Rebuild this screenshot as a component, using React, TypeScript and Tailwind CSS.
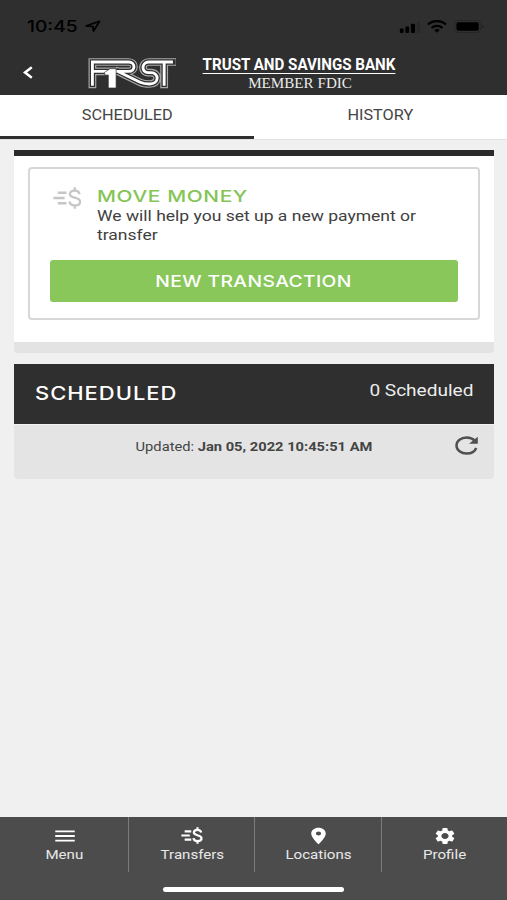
import type { ReactNode } from 'react'
import { MdLocationOn, MdMenu, MdSettings } from 'react-icons/md'

function BankLogo() {
  const letters =
    'M39 108V37H146C167 37 167 65 146 65H39M116 66L180 98C190 103 196 103 208 103C237 103 237 69 212 69H204C183 69 183 37 206 37H277M251 37V108'
  return (
    <svg className="h-[33px] w-[89px]" viewBox="23 19 263 99" fill="none" preserveAspectRatio="none">
      <path d={letters} stroke="#a8a8a8" strokeWidth="23" strokeLinecap="square" clipPath="url(#logo-base)" />
      <path d={letters} stroke="#2f2f2f" strokeWidth="16" strokeLinecap="square" clipPath="url(#logo-inner)" />
      <path d={letters} stroke="#ffffff" strokeWidth="8.5" />
      <path d="M75 68L91 57H109V115H86V76H75Z" fill="#ffffff" stroke="#2f2f2f" strokeWidth="2" />
      <clipPath id="logo-base">
        <rect x="23" y="19" width="263" height="97" />
      </clipPath>
      <clipPath id="logo-inner">
        <rect x="23" y="19" width="263" height="93" />
      </clipPath>
    </svg>
  )
}

function TransferIcon({ className, weight = 2.6 }: { className: string; weight?: number }) {
  return (
    <svg
      className={className}
      viewBox="0 0 30 23"
      fill="none"
      stroke="currentColor"
      strokeWidth={weight}
      preserveAspectRatio="none"
    >
      <path d="M5 6H14M.5 11.5H12M5 17H14" />
      <path d="M27.5 7.5C27 5 25 3.8 22.5 3.8C19.7 3.8 17.5 5.2 17.5 7.5C17.5 12.2 28 10 28 15.3C28 17.8 25.7 19.2 22.7 19.2C19.5 19.2 17.3 17.8 17 15M22.5 .3V4M22.5 19V22.7" />
    </svg>
  )
}

function StatusBar() {
  return (
    <div className="flex h-[52px] items-center justify-between pl-[27px] pr-[22px] text-black">
      <div className="flex items-center">
        <span className="w-[58px] origin-left scale-x-[1.2] whitespace-nowrap font-[Inter,sans-serif] text-base font-medium">
          10:45
        </span>
        <svg className="h-[12px] w-4" viewBox="0 0 16 14" preserveAspectRatio="none" fill="none" stroke="currentColor" strokeWidth="1.8" strokeLinejoin="round">
          <path d="M1 7L14.5 1.5L8.5 13L8 7.5Z" />
        </svg>
      </div>
      <div className="flex items-center">
        <svg className="mt-0.5 h-[11px] w-[22px]" viewBox="0 0 22 12" fill="currentColor">
          <rect x="0" y="7" width="4" height="5" rx="1" />
          <rect x="6" y="5" width="4" height="7" rx="1" />
          <rect x="12" y="2" width="4.5" height="10" rx="1" />
          <rect x="18.5" y="0" width="3.5" height="12" rx="1" opacity=".15" />
        </svg>
        <svg className="ml-1.5 h-[13px] w-5" viewBox="0 0 20 13" fill="none" stroke="currentColor" strokeWidth="2.3">
          <path d="M1 4.5C6 0 14 0 19 4.5M4.5 8C7.5 5.2 12.5 5.2 15.5 8" />
          <path d="M7.2 10C8.8 8.6 11.2 8.6 12.8 10L10 12.8Z" fill="currentColor" stroke="none" />
        </svg>
        <svg className="ml-1.5 h-[13px] w-8" viewBox="0 0 32 14">
          <rect x=".5" y=".5" width="28" height="13" rx="4" fill="none" stroke="#000" opacity=".2" />
          <rect x="2.5" y="2.5" width="24" height="9" rx="2" />
          <path d="M30 4.5C32 5.5 32 8.5 30 9.5Z" opacity=".3" />
        </svg>
      </div>
    </div>
  )
}

function Header() {
  return (
    <header className="h-[95px] shrink-0 bg-[#2f2f2f]">
      <StatusBar />
      <div className="flex h-[43px] items-start pl-[22px]">
        <svg className="mt-[13px] h-[15px] w-3" viewBox="0 0 12 14" fill="none" stroke="#fff" strokeWidth="2.5">
          <path d="M9.8 1.8L3 7L9.8 12.2" />
        </svg>
        <div className="ml-[53px] mt-1">
          <BankLogo />
        </div>
        <div className="ml-[26px] mt-[3px] flex w-[193px] flex-col items-center whitespace-nowrap text-white">
          <span className="scale-x-[.945] border-b border-white pt-px text-base font-bold leading-[17px]">
            TRUST AND SAVINGS BANK
          </span>
          <span className="ml-[3px] mt-px scale-x-[1.08] font-['Liberation_Serif',serif] text-sm leading-[18px] text-[#ececec]">
            MEMBER FDIC
          </span>
        </div>
      </div>
    </header>
  )
}

function Tab({ label, active = false }: { label: string; active?: boolean }) {
  return (
    <button
      className={`flex h-11 flex-1 justify-center border-b-[3px] pt-2.5 text-sm text-[#454545] ${
        active ? 'border-[#2f2f2f]' : 'border-white'
      }`}
    >
      <span className="scale-x-[1.16]">{label}</span>
    </button>
  )
}

function MoveMoneyCard() {
  return (
    <section className="h-[203px] overflow-hidden rounded-b border-b-[11px] border-t-[6px] border-b-[#e3e3e3] border-t-[#2b2b2b] bg-white px-3.5 pt-[11px]">
      <div className="h-[153px] rounded border-2 border-[#d7d7d7] px-5 pt-[17px]">
        <div className="flex h-[74px]">
          <TransferIcon className="ml-[3px] mt-px h-[22px] w-[29px] text-[#c6c6c6]" weight={2.4} />
          <div className="ml-[15px]">
            <h2 className="w-fit origin-left scale-x-[1.3] whitespace-nowrap pt-px font-[Inter,sans-serif] text-base font-medium leading-[19px] tracking-[.03em] text-[#84c556]">
              MOVE MONEY
            </h2>
            <p className="w-[274px] origin-left scale-x-[1.167] pt-px text-[15px] leading-[19px] text-[#404040]">
              We will help you set up a new payment or transfer
            </p>
          </div>
        </div>
        <button className="flex h-[42px] w-full items-center justify-center rounded-[3px] bg-[#89c75b] font-[Inter,sans-serif] text-base font-medium text-white">
          <span className="scale-x-[1.205] tracking-[.02em]">NEW TRANSACTION</span>
        </button>
      </div>
    </section>
  )
}

function RefreshIcon() {
  return (
    <svg className="mr-[15px] mt-px h-[19px] w-6" viewBox="0 0 24 19" fill="none">
      <path d="M20 4.8C17.8 2.6 14.8 1.5 11.7 1.5C6 1.5 1.5 5 1.5 9.5C1.5 14 6 17.5 11.7 17.5C16.2 17.5 20 15.2 21.2 12" stroke="currentColor" strokeWidth="2.5" />
      <path d="M22.8 .8V7.7H14Z" fill="currentColor" />
    </svg>
  )
}

function ScheduledCard() {
  return (
    <section className="mt-[11px] overflow-hidden rounded-b">
      <div className="flex h-[60px] justify-between bg-[#2f2f2f] px-[21px] text-white">
        <h2 className="origin-left scale-x-[1.22] pt-4 font-[Inter,sans-serif] text-lg font-medium tracking-[.045em]">
          SCHEDULED
        </h2>
        <span className="origin-right scale-x-[1.19] pt-[15px] text-base text-[#ededed]">0 Scheduled</span>
      </div>
      <div className="flex h-[55px] items-start border-t border-[#f3f3f3] bg-[#e4e4e4] pt-2.5 text-[#505050]">
        <p className="ml-[39px] mt-0.5 flex-1 scale-x-[1.13] text-center text-[13px] leading-5 text-[#444]">
          Updated: <b>Jan 05, 2022 10:45:51 AM</b>
        </p>
        <RefreshIcon />
      </div>
    </section>
  )
}

function NavItem({ icon, label }: { icon: ReactNode; label: string }) {
  return (
    <div className="flex h-[55px] items-stretch justify-center pl-px pt-[7px] text-white">
      <button className="flex flex-col items-center">
        <span className="flex h-[23px] items-center">{icon}</span>
        <span className="scale-x-[1.16] text-[13px] leading-4 text-[#e8e8e8]">{label}</span>
      </button>
    </div>
  )
}

function BottomNav() {
  return (
    <nav className="mt-auto h-[83px] bg-[#4c4c4c]">
      <div className="grid grid-cols-[129px_126px_127px_125px] divide-x divide-[#7c7c7c]">
        <NavItem icon={<MdMenu className="h-[22px] w-[26px]" preserveAspectRatio="none" />} label="Menu" />
        <NavItem icon={<TransferIcon className="h-[17px] w-[22px]" weight={3} />} label="Transfers" />
        <NavItem icon={<MdLocationOn className="h-5 w-[25px]" preserveAspectRatio="none" />} label="Locations" />
        <NavItem icon={<MdSettings className="h-5 w-6" preserveAspectRatio="none" />} label="Profile" />
      </div>
      <div className="mx-auto mt-[15px] h-[5px] w-[181px] rounded-full bg-white" />
    </nav>
  )
}

export default function App() {
  return (
    <div className="flex h-[900px] w-[507px] flex-col overflow-hidden bg-[#f0f0f0] font-[Roboto,sans-serif]">
      <Header />
      <div className="flex shrink-0 border-b border-[#e2e2e2] bg-white">
        <Tab label="SCHEDULED" active />
        <Tab label="HISTORY" />
      </div>
      <main className="pl-3.5 pr-[13px] pt-2.5">
        <MoveMoneyCard />
        <ScheduledCard />
      </main>
      <BottomNav />
    </div>
  )
}
